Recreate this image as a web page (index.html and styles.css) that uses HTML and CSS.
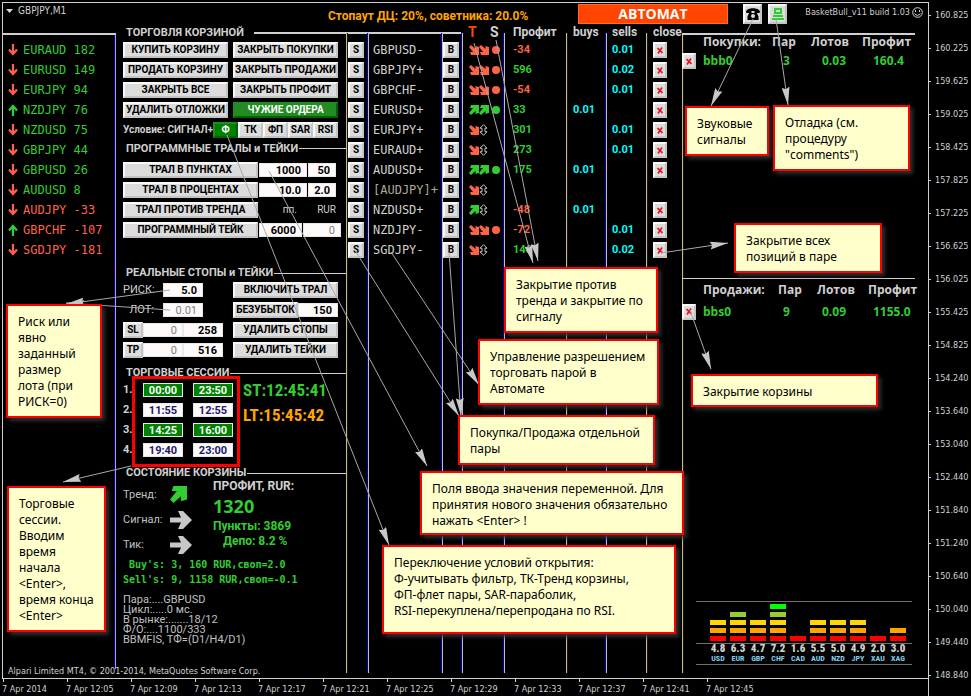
FILE: index.html
```html
<!DOCTYPE html>
<html lang="ru">
<head>
<meta charset="utf-8">
<title>GBPJPY,M1 – BasketBull</title>
<link rel="stylesheet" href="styles.css">
</head>
<body>
<svg class="defs" aria-hidden="true">
  <symbol id="down" viewBox="0 0 10 12"><path d="M5 0v10M1 5.500l4 4.500 4-4.500" fill="none" stroke="currentColor" stroke-width="2.200"/></symbol>
  <symbol id="up" viewBox="0 0 10 12"><path d="M5 12V2M1 6.500L5 2l4 4.500" fill="none" stroke="currentColor" stroke-width="2.200"/></symbol>
  <symbol id="se" viewBox="0 0 10 10"><path d="M0 2L2 0l4.500 4L6.500 1 10 2v8H2L1 7h3z" fill="currentColor"/></symbol>
  <symbol id="ne" viewBox="0 0 10 10"><path d="M0 8L2 10l4.500-4L6.500 9 10 8V0H2L1 3h3z" fill="currentColor"/></symbol>
  <symbol id="east" viewBox="0 0 22 18"><path d="M0 6.500h11L8 0h5l9 9-9 9H8l3-6.500H0z" fill="currentColor"/></symbol>
  <symbol id="flat" viewBox="0 0 9 12"><path d="M4.500.700L8 4.200H6v3.600h2L4.500 11.300 1 7.800h2V4.200H1z" fill="none" stroke="#c8c8c8" stroke-width="1"/></symbol>
  <symbol id="dot" viewBox="0 0 8 8"><circle cx="4" cy="4" r="4" fill="currentColor"/></symbol>
  <symbol id="x" viewBox="0 0 6 7"><path d="M.500 1L5.500 6M5 .500L1 6.500" fill="none" stroke="#e8101c" stroke-width="1.600"/></symbol>
</svg>

<div class="terminal">
  <main class="chart">
    <header class="top">
      <svg class="caret" viewBox="0 0 7 4" aria-hidden="true"><path d="M0 0h7L3.500 4z" fill="#d8d8d8"/></svg>
      <h1>GBPJPY,M1</h1>
      <p class="stopout">Стопаут ДЦ: 20%, советника: 20.0%</p>
      <button class="auto">АВТОМАТ</button>
      <div class="tools">
        <button class="tool" aria-label="Звук"><svg width="14" height="12" viewBox="0 0 14 12"><path d="M0 3.500C1-1 13-1 14 3.500L13.500 5H10V3H4v2H.500zM4 3h1.500v2h3V3H10l2.500 5.500V12h-11V8.500z" fill="#000"/><circle cx="7" cy="8" r="2" fill="#ddd"/></svg></button>
        <button class="tool" aria-label="Отладка"><svg width="12" height="12" viewBox="0 0 12 12"><path d="M2 0h8v6H2zM1 7h10v2H1zM0 10h12v2H0z" fill="#32cd32"/><path d="M4 2h4v2H4z" fill="#bfeebf"/></svg></button>
      </div>
      <p class="expert">BasketBull_v11 build 1.03<svg width="11" height="11" viewBox="0 0 11 11" aria-hidden="true"><circle cx="5.500" cy="5.500" r="4.800" fill="none" stroke="#d8d8d8"/><path d="M3.500 3v2M7.500 3v2" stroke="#d8d8d8"/><path d="M2.500 6.500q3 3.500 6 0" fill="none" stroke="#d8d8d8"/></svg></p>
    </header>

    <div class="panels">
      <ul class="ranks">
        <li class="pos"><svg class="neg"><use href="#down"/></svg>EURAUD 182</li>
        <li class="pos"><svg class="neg"><use href="#down"/></svg>EURUSD 149</li>
        <li class="pos"><svg class="neg"><use href="#down"/></svg>EURJPY 94</li>
        <li class="pos"><svg class="pos"><use href="#up"/></svg>NZDJPY 76</li>
        <li class="pos"><svg class="neg"><use href="#down"/></svg>NZDUSD 75</li>
        <li class="pos"><svg class="neg"><use href="#down"/></svg>GBPJPY 44</li>
        <li class="pos"><svg class="neg"><use href="#down"/></svg>GBPUSD 26</li>
        <li class="pos"><svg class="neg"><use href="#down"/></svg>AUDUSD 8</li>
        <li class="neg"><svg class="neg"><use href="#down"/></svg>AUDJPY -33</li>
        <li class="neg"><svg class="pos"><use href="#up"/></svg>GBPCHF -107</li>
        <li class="neg"><svg class="neg"><use href="#down"/></svg>SGDJPY -181</li>
      </ul>

      <div class="controls">
        <h2 class="first">ТОРГОВЛЯ КОРЗИНОЙ</h2>
        <div class="row pair"><button>КУПИТЬ КОРЗИНУ</button><button>ЗАКРЫТЬ ПОКУПКИ</button></div>
        <div class="row pair"><button>ПРОДАТЬ КОРЗИНУ</button><button>ЗАКРЫТЬ ПРОДАЖИ</button></div>
        <div class="row pair"><button>ЗАКРЫТЬ ВСЕ</button><button>ЗАКРЫТЬ ПРОФИТ</button></div>
        <div class="row pair"><button>УДАЛИТЬ ОТЛОЖКИ</button><button class="on">ЧУЖИЕ ОРДЕРА</button></div>
        <div class="row conditions"><span>Условие: СИГНАЛ+</span><button class="on">Ф</button><button>ТК</button><button>ФП</button><button>SAR</button><button>RSI</button></div>

        <h2 class="high">ПРОГРАММНЫЕ ТРАЛЫ и ТЕЙКИ</h2>
        <div class="row trail"><button id="b1">ТРАЛ В ПУНКТАХ</button><input class="w48" aria-labelledby="b1" value="1000"><input class="w28" aria-labelledby="b1" value="50"></div>
        <div class="row trail"><button id="b2">ТРАЛ В ПРОЦЕНТАХ</button><input class="w48" aria-labelledby="b2" value="10.0"><input class="w28" aria-labelledby="b2" value="2.0"></div>
        <div class="row trail"><button>ТРАЛ ПРОТИВ ТРЕНДА</button><span class="unit">пп.</span><span class="unit">RUR</span></div>
        <div class="row trail"><button id="b3">ПРОГРАММНЫЙ ТЕЙК</button><input class="w43" aria-labelledby="b3" value="6000"><input class="w38 dim" aria-labelledby="b3" value="0"></div>
        <div class="row"></div>

        <h2>РЕАЛЬНЫЕ СТОПЫ и ТЕЙКИ</h2>
        <div class="row pair"><div class="field"><label for="risk">РИСК:</label><input id="risk" class="w40" value="5.0"></div><button>ВКЛЮЧИТЬ ТРАЛ</button></div>
        <div class="row pair"><div class="field"><label class="end" for="lot">ЛОТ:</label><input id="lot" class="w40 dim" value="0.01"></div><div class="field"><button id="be" class="grow">БЕЗУБЫТОК</button><input class="w40" aria-labelledby="be" value="150"></div></div>
        <div class="row pair"><div class="field"><button id="sl" class="mini">SL</button><input class="w40 dim" aria-labelledby="sl" value="0"><input class="w40" aria-labelledby="sl" value="258"></div><button>УДАЛИТЬ СТОПЫ</button></div>
        <div class="row pair"><div class="field"><button id="tp" class="mini">TP</button><input class="w40 dim" aria-labelledby="tp" value="0"><input class="w40" aria-labelledby="tp" value="516"></div><button>УДАЛИТЬ ТЕЙКИ</button></div>

        <h2>ТОРГОВЫЕ СЕССИИ</h2>
        <div class="sessions">
          <div>
            <div class="row times"><span>1.</span><input class="w40 on" aria-label="Начало 1" value="00:00"><input class="w40 on" aria-label="Конец 1" value="23:50"></div>
            <div class="row times"><span>2.</span><input class="w40" aria-label="Начало 2" value="11:55"><input class="w40" aria-label="Конец 2" value="12:55"></div>
            <div class="row times"><span>3.</span><input class="w40 on" aria-label="Начало 3" value="14:25"><input class="w40 on" aria-label="Конец 3" value="16:00"></div>
            <div class="row times"><span>4.</span><input class="w40" aria-label="Начало 4" value="19:40"><input class="w40" aria-label="Конец 4" value="23:00"></div>
          </div>
          <div class="clocks"><p class="pos">ST:12:45:41</p><p class="local">LT:15:45:42</p></div>
        </div>

        <h2>СОСТОЯНИЕ КОРЗИНЫ</h2>
        <div class="state">
          <dl>
            <dt>Тренд:</dt><dd><svg class="pos trend"><use href="#ne"/></svg></dd>
            <dt>Сигнал:</dt><dd><svg><use href="#east"/></svg></dd>
            <dt>Тик:</dt><dd><svg><use href="#east"/></svg></dd>
          </dl>
          <div class="totals"><p class="caption">ПРОФИТ, RUR:</p><p class="sum">1320</p><p>Пункты: 3869</p><p class="depo">Депо: 8.2 %</p></div>
        </div>
        <pre class="sides"> Buy's: 3, 160 RUR,своп=2.0
Sell's: 9, 1158 RUR,своп=-0.1</pre>
        <p class="info">Пара:....GBPUSD<br>Цикл:.....0 мс.<br>В рынке:.......18/12<br>Ф/О:....1100/333<br>BBMFIS, ТФ=(D1/H4/D1)</p>
      </div>

      <table class="trade">
        <colgroup><col class="c21"><col class="c74"><col class="c20"><col class="c42"><col class="c63"><col class="c39"><col class="c41"><col class="c36"></colgroup>
        <thead><tr><th></th><th></th><th></th><th class="ts"><span class="t">T</span><span>S</span></th><th>Профит</th><th>buys</th><th>sells</th><th>close</th></tr></thead>
        <tbody>
          <tr><td><button>S</button></td><td>GBPUSD-</td><td><button>B</button></td><td class="neg"><svg><use href="#se"/></svg><svg><use href="#se"/></svg><svg class="dot"><use href="#dot"/></svg></td><td class="neg">-34</td><td></td><td>0.01</td><td><button class="close" aria-label="Закрыть GBPUSD"><svg><use href="#x"/></svg></button></td></tr>
          <tr><td><button>S</button></td><td>GBPJPY+</td><td><button>B</button></td><td class="neg"><svg><use href="#se"/></svg><svg><use href="#se"/></svg><svg class="dot"><use href="#dot"/></svg></td><td class="pos">596</td><td></td><td>0.02</td><td><button class="close" aria-label="Закрыть GBPJPY"><svg><use href="#x"/></svg></button></td></tr>
          <tr><td><button>S</button></td><td>GBPCHF-</td><td><button>B</button></td><td class="neg"><svg><use href="#se"/></svg><svg><use href="#se"/></svg><svg class="dot"><use href="#dot"/></svg></td><td class="neg">-54</td><td></td><td>0.01</td><td><button class="close" aria-label="Закрыть GBPCHF"><svg><use href="#x"/></svg></button></td></tr>
          <tr><td><button>S</button></td><td>EURUSD+</td><td><button>B</button></td><td class="pos"><svg><use href="#ne"/></svg><svg><use href="#ne"/></svg><svg class="dot"><use href="#dot"/></svg></td><td class="pos">33</td><td>0.01</td><td></td><td><button class="close" aria-label="Закрыть EURUSD"><svg><use href="#x"/></svg></button></td></tr>
          <tr><td><button>S</button></td><td>EURJPY+</td><td><button>B</button></td><td class="neg"><svg><use href="#se"/></svg><svg class="flat"><use href="#flat"/></svg></td><td class="pos">301</td><td></td><td>0.01</td><td><button class="close" aria-label="Закрыть EURJPY"><svg><use href="#x"/></svg></button></td></tr>
          <tr><td><button>S</button></td><td>EURAUD+</td><td><button>B</button></td><td class="neg"><svg><use href="#se"/></svg><svg class="flat"><use href="#flat"/></svg></td><td class="pos">273</td><td></td><td>0.01</td><td><button class="close" aria-label="Закрыть EURAUD"><svg><use href="#x"/></svg></button></td></tr>
          <tr><td><button>S</button></td><td>AUDUSD+</td><td><button>B</button></td><td class="pos"><svg><use href="#ne"/></svg><svg><use href="#ne"/></svg><svg class="dot"><use href="#dot"/></svg></td><td class="pos">175</td><td>0.01</td><td></td><td><button class="close" aria-label="Закрыть AUDUSD"><svg><use href="#x"/></svg></button></td></tr>
          <tr><td><button>S</button></td><td class="off">[AUDJPY]+</td><td><button>B</button></td><td class="neg"><svg><use href="#se"/></svg><svg class="flat"><use href="#flat"/></svg></td><td></td><td></td><td></td><td></td></tr>
          <tr><td><button>S</button></td><td>NZDUSD+</td><td><button>B</button></td><td class="pos"><svg><use href="#ne"/></svg><svg class="flat"><use href="#flat"/></svg></td><td class="neg">-48</td><td>0.01</td><td></td><td><button class="close" aria-label="Закрыть NZDUSD"><svg><use href="#x"/></svg></button></td></tr>
          <tr><td><button>S</button></td><td>NZDJPY-</td><td><button>B</button></td><td class="neg"><svg><use href="#se"/></svg><svg><use href="#se"/></svg><svg class="dot"><use href="#dot"/></svg></td><td class="neg">-72</td><td></td><td>0.01</td><td><button class="close" aria-label="Закрыть NZDJPY"><svg><use href="#x"/></svg></button></td></tr>
          <tr><td><button>S</button></td><td>SGDJPY-</td><td><button>B</button></td><td class="neg"><svg><use href="#se"/></svg><svg class="flat"><use href="#flat"/></svg></td><td class="pos">146</td><td></td><td>0.02</td><td><button class="close" aria-label="Закрыть SGDJPY"><svg><use href="#x"/></svg></button></td></tr>
          <tr class="rest"><td></td><td></td><td></td><td></td><td></td><td></td><td></td><td></td></tr>
        </tbody>
      </table>

      <div class="baskets">
        <table class="basket buy">
          <colgroup><col class="b1"><col class="b2"><col class="b3"><col class="b4"><col></colgroup>
          <thead><tr><th></th><th>Покупки:</th><th>Пар</th><th>Лотов</th><th>Профит</th></tr></thead>
          <tbody><tr><td><button class="close" aria-label="Закрыть bbb0"><svg><use href="#x"/></svg></button></td><td>bbb0</td><td>3</td><td>0.03</td><td>160.4</td></tr></tbody>
        </table>
        <table class="basket sell">
          <colgroup><col class="b1"><col class="b2"><col class="b3"><col class="b4"><col></colgroup>
          <thead><tr><th></th><th>Продажи:</th><th>Пар</th><th>Лотов</th><th>Профит</th></tr></thead>
          <tbody><tr><td><button class="close" aria-label="Закрыть bbs0"><svg><use href="#x"/></svg></button></td><td>bbs0</td><td>9</td><td>0.09</td><td>1155.0</td></tr></tbody>
        </table>
        <div class="meter">
          <ul class="bars">
            <li><i></i><i></i><i></i></li>
            <li><i></i><i></i><i></i><i></i></li>
            <li><i></i><i></i><i></i></li>
            <li><i></i><i></i><i></i><i></i><i></i></li>
            <li><i></i></li>
            <li><i></i><i></i><i></i></li>
            <li><i></i><i></i><i></i></li>
            <li><i></i><i></i><i></i></li>
            <li><i></i></li>
            <li><i></i><i></i></li>
          </ul>
          <ul class="names">
            <li><b>4.8</b>USD</li><li><b>6.3</b>EUR</li><li><b>4.7</b>GBP</li><li><b>7.2</b>CHF</li><li><b>1.6</b>CAD</li><li><b>5.5</b>AUD</li><li><b>5.0</b>NZD</li><li><b>4.9</b>JPY</li><li><b>2.0</b>XAU</li><li><b>3.0</b>XAG</li>
          </ul>
        </div>
      </div>
    </div>
    <footer class="legal">Alpari Limited MT4, © 2001-2014, MetaQuotes Software Corp.</footer>
  </main>

  <ol class="prices">
    <li>160.825</li><li>160.225</li><li>159.625</li><li>159.025</li><li>158.425</li><li>157.825</li><li>157.225</li><li>156.625</li><li>156.025</li><li>155.425</li><li>154.825</li><li>154.240</li><li>153.640</li><li>153.040</li><li>152.440</li><li>151.840</li><li>151.240</li><li>150.640</li><li>150.040</li><li>149.440</li><li>148.840</li>
  </ol>
  <ol class="hours">
    <li>7 Apr 2014</li><li>7 Apr 12:05</li><li>7 Apr 12:09</li><li>7 Apr 12:13</li><li>7 Apr 12:17</li><li>7 Apr 12:21</li><li>7 Apr 12:25</li><li>7 Apr 12:29</li><li>7 Apr 12:33</li><li>7 Apr 12:37</li><li>7 Apr 12:41</li><li>7 Apr 12:45</li>
  </ol>

  <svg class="arrows" width="930" height="696" aria-hidden="true">
    <defs><marker id="tip" viewBox="0 0 18 8" refX="18" refY="4" markerWidth="18" markerHeight="8" markerUnits="userSpaceOnUse" orient="auto"><path d="M0 0L18 4 0 8 2 4z" fill="#c8c8c8"/></marker></defs>
    <g fill="none" stroke="#a8a8a8" stroke-width="1">
      <path d="M474 43L533 263" marker-end="url(#tip)"/>
      <path d="M496 40L538 261" marker-end="url(#tip)"/>
      <path d="M753 19L711 106" marker-end="url(#tip)"/>
      <path d="M776 19L788 105" marker-end="url(#tip)"/>
      <path d="M661 253L728 243" marker-end="url(#tip)"/>
      <path d="M690 310L711 369" marker-end="url(#tip)"/>
      <path d="M170 290L66 304" marker-end="url(#tip)"/>
      <path d="M170 310L66 303" marker-end="url(#tip)"/>
      <path d="M131 466L63 482" marker-end="url(#tip)"/>
      <path d="M356 252L459 416" marker-end="url(#tip)"/>
      <path d="M391 252L479 385" marker-end="url(#tip)"/>
      <path d="M449 252L461 416" marker-end="url(#tip)"/>
      <path d="M227 135L389 545" marker-end="url(#tip)"/>
      <path d="M269 171L427 466" marker-end="url(#tip)"/>
    </g>
  </svg>
  <div class="frame"></div>
  <aside class="note n-risk">Риск или<br>явно<br>заданный<br>размер<br>лота (при<br>РИСК=0)</aside>
  <aside class="note n-session">Торговые<br>сессии.<br>Вводим<br>время<br>начала<br>&lt;Enter&gt;,<br>время конца<br>&lt;Enter&gt;</aside>
  <aside class="note n-sound">Звуковые<br>сигналы</aside>
  <aside class="note n-debug">Отладка (см.<br>процедуру<br>"comments")</aside>
  <aside class="note n-pair">Закрытие всех<br>позиций в паре</aside>
  <aside class="note n-basket">Закрытие корзины</aside>
  <aside class="note n-trend">Закрытие против<br>тренда и закрытие по<br>сигналу</aside>
  <aside class="note n-permit">Управление разрешением<br>торговать парой в<br>Автомате</aside>
  <aside class="note n-single">Покупка/Продажа отдельной<br>пары</aside>
  <aside class="note n-input">Поля ввода значения переменной. Для<br>принятия нового значения обязательно<br>нажать &lt;Enter&gt; !</aside>
  <aside class="note n-switch">Переключение условий открытия:<br>Ф-учитывать фильтр, ТК-Тренд корзины,<br>ФП-флет пары, SAR-параболик,<br>RSI-перекуплена/перепродана по RSI.</aside>
</div>
</body>
</html>
```

FILE: styles.css
```css
* { box-sizing: border-box; }
:root {
  --ui: Roboto, "Open Sans", sans-serif;
  --mono: "DejaVu Sans Mono", monospace;
  --tahoma: "DejaVu Sans Condensed", "Noto Sans", sans-serif;
  --narrow: "Roboto Condensed", "DejaVu Sans Condensed", sans-serif;
  --line: #d0d0d0;
  --green: #32cd32;
  --red: #ff6347;
}
body { margin: 0; background: #000; color: #d0d0d0; font: 11px/16px var(--ui); }
h1, h2, p, ul, ol, dl, dd, pre { margin: 0; padding: 0; }
ul, ol { list-style: none; }
.defs { position: absolute; width: 0; height: 0; }
.pos { color: var(--green); }
.neg { color: var(--red); }

.terminal {
  position: relative;
  display: grid;
  grid-template: 1fr 17px / 1fr 42px;
  min-height: 100vh;
  padding: 2px 0 0 2px;
}
.chart {
  position: relative;
  display: flex;
  flex-direction: column;
  border: 1px solid var(--line);
  padding-bottom: 5px;
}

/* title bar */
.top { display: flex; height: 21px; padding-top: 1px; font-family: var(--tahoma); }
.caret { width: 7px; height: 4px; margin: 5px 5px 0 3px; }
h1 { width: 310px; font-size: 10px; font-weight: 400; line-height: 14px; }
.stopout { width: 250px; font: 700 12px/24px var(--ui); color: #ffa500; white-space: nowrap; }
.auto { width: 150px; height: 20px; padding: 0; border: 1px solid #ff6a30; background: #ff4500; color: #fff; font: 700 14px/18px "Open Sans", sans-serif; }
.tools { display: flex; gap: 6px; margin-left: 15px; }
.tool { display: grid; place-items: center; width: 19px; height: 20px; padding: 0; }
.expert { display: flex; gap: 2px; margin-left: auto; padding-right: 5px; font-size: 9px; line-height: 16px; white-space: nowrap; }
.expert svg { margin-top: 3px; }

button {
  height: 16px;
  padding: 0;
  border: 2px solid;
  border-color: #f8f8f8 #c4c4c4 #c4c4c4 #f8f8f8;
  border-radius: 0;
  background: #dcdcdc;
  color: #000;
  font: 700 10px/12px var(--ui);
  white-space: nowrap;
}
button.on { border-color: #228b22 #006400 #006400 #228b22; background: #228b22; color: #fff; }
input {
  height: 14px;
  padding: 0 5px;
  border: 1px solid #e8e8e8;
  border-radius: 0;
  background: #fffafa;
  color: #000;
  font: 700 11px/12px var(--ui);
  text-align: right;
}
input.dim { color: #808080; font-weight: 400; }
input.on { background: #008000; color: #fff; }
.w28 { width: 28px; }
.w38 { width: 38px; }
.w40 { width: 40px; }
.w43 { width: 43px; }
.w48 { width: 48px; }

.panels { flex: 1; display: grid; grid-template-columns: 113px 230px 336px 1fr; }

.ranks {
  margin: 9px 0 4px;
  padding: 5px 0 0 5px;
  border-top: 2px solid var(--line);
  background: linear-gradient(90deg, #0000a0 1px, #b898c8 1px) right / 2px 100% no-repeat;
  font: 12px/20px var(--mono);
}
.ranks li { display: flex; align-items: center; gap: 5px; height: 20px; white-space: pre; }
.ranks svg { width: 10px; height: 12px; }

.controls { padding-left: 7px; }
h2 { display: flex; align-items: center; gap: 1px; height: 20px; padding: 6px 0 0 3px; font-size: 11px; font-weight: 700; line-height: 14px; white-space: nowrap; }
h2::after { content: ""; flex: 1; height: 1px; background: var(--line); }
h2.first { height: 16px; padding-top: 2px; gap: 10px; }
h2.first::after { height: 2px; margin-right: -115px; }
h2.high { padding: 0 0 3px 3px; }
.row { display: flex; align-items: center; height: 20px; }
.pair { display: grid; grid-template-columns: 105px 105px; gap: 5px; }
.conditions { font-size: 10px; font-weight: 700; }
.conditions span { width: 90px; white-space: nowrap; }
.conditions button { width: 25px; }
.conditions button.on { background: #008000; }
.trail { gap: 1px; }
.trail button { width: 135px; }
.unit { width: 38px; font-size: 10px; text-align: right; }
.field { display: flex; align-items: center; }
.field label { width: 40px; padding-right: 9px; font-size: 11px; }
.end { text-align: right; }
.grow { flex: 1; }
.mini { width: 20px; }
.sessions { display: flex; }
.times { gap: 10px; }
.times span { width: 10px; font-weight: 700; }
.times input { color: #191970; text-align: center; padding: 0; }
.times input.on { color: #fff; }
.clocks { display: grid; gap: 4px; align-content: start; padding-left: 10px; font: 700 17px/21px var(--narrow); white-space: nowrap; }
.clocks .local { color: #ffa500; }
.state { display: grid; grid-template-columns: 90px 1fr; color: var(--green); }
.state dl { display: grid; grid-template-columns: 47px 1fr; padding-top: 2px; color: #c0c0c0; font-size: 11px; line-height: 25px; }
.state dd { display: flex; align-items: center; height: 25px; }
.state svg { width: 22px; height: 18px; color: #c8c8c8; }
.state svg.trend { width: 17px; height: 17px; color: var(--green); }
.totals { font-size: 12px; font-weight: 700; line-height: 12px; }
.totals .caption { color: #d0d0d0; }
.totals .sum { font: 700 18px/28px "Open Sans", sans-serif; }
.totals .depo { padding-left: 10px; line-height: 18px; }
.sides { color: var(--green); font: 700 10px/15px var(--mono); }
.info { margin-top: 8px; color: #c0c0c0; font-size: 11px; line-height: 10px; }

/* pair table; every column carries its own rule on the left */
.trade { width: 336px; height: 100%; table-layout: fixed; border-collapse: collapse; }
.c21 { width: 21px; } .c74 { width: 74px; } .c20 { width: 20px; } .c42 { width: 42px; }
.c63 { width: 63px; } .c39 { width: 39px; } .c41 { width: 41px; } .c36 { width: 36px; }
.trade th, .trade td { padding: 0 0 0 7px; background: linear-gradient(90deg, #98d098 1px, #480000 1px) left / 2px 100% no-repeat; text-align: left; white-space: nowrap; }
.trade tr > :nth-child(2), .trade tr > :nth-child(3), .trade tr > :nth-child(4), .trade tr > :nth-child(5), .trade tr > :nth-child(7) {
  background-image: linear-gradient(90deg, #0000a0 1px, #c8b8d0 1px);
}
.trade th { height: 16px; background-size: 2px 7px; background-position: left bottom; font-size: 12px; font-weight: 700; line-height: 14px; }
.trade th:nth-child(5), .trade td:nth-child(5) { padding-left: 10px; }
.trade .ts { font-size: 14px; }
.ts .t { display: inline-block; width: 22px; color: #ff4500; }
.trade tr { height: 20px; }
.trade thead tr { height: 16px; }
.trade .rest { height: auto; }
.trade td { font: 700 11px/16px var(--ui); }
.trade td button { display: block; width: 16px; padding: 0; }
.trade td:nth-child(1), .trade td:nth-child(3) { padding-left: 2px; }
.trade td:nth-child(2) { padding-left: 6px; font: 12px/16px var(--mono); }
.trade td:nth-child(4) { padding-left: 8px; }
.trade td:nth-child(4) svg { width: 10px; height: 10px; vertical-align: middle; }
.trade td:nth-child(4) .dot { width: 8px; height: 8px; margin-left: 3px; }
.trade td:nth-child(4) .flat { width: 9px; height: 12px; }
.trade td:nth-child(6), .trade td:nth-child(7) { color: #00ffff; }
.trade .off { color: #b0a898; }
.trade td .close, .close { width: 14px; }
.close svg { width: 6px; height: 7px; display: block; margin: auto; }

.baskets { display: flex; flex-direction: column; padding: 9px 13px 8px 0; background: linear-gradient(90deg, #98d098 1px, #480000 1px) left bottom / 2px calc(100% - 9px) no-repeat; }
.basket { border-top: 2px solid var(--line); border-collapse: collapse; table-layout: fixed; width: 100%; }
.basket.sell { margin-top: 207px; border-top-width: 1px; }
.basket th, .basket td { height: 20px; padding: 0; font: 700 12px/14px "Open Sans", sans-serif; text-align: left; }
.basket th { height: 17px; vertical-align: top; }
.basket.sell th { height: 23px; vertical-align: middle; }
.basket td { color: var(--green); }
.basket .close { display: block; }
.b1 { width: 21px; } .b2 { width: 69px; } .b3 { width: 39px; } .b4 { width: 51px; }
.sell .b2 { width: 75px; }
.buy td:nth-child(n+3) { padding-left: 11px; }
.sell td:nth-child(n+3) { padding-left: 5px; }

.meter { margin: auto 3px 0 14px; border: solid #707070; border-width: 1px 0; }
.bars, .names { display: grid; grid-template-columns: repeat(10, 16px); gap: 4px; padding-left: 14px; }
.bars { height: 42px; padding-bottom: 2px; border-bottom: 1px solid #707070; }
.bars li { display: flex; flex-direction: column-reverse; gap: 3px; }
.bars i { height: 5px; background: #f00; }
.bars i:nth-child(2) { background: #ffa500; }
.bars i:nth-child(3) { background: #ffd700; }
.bars i:nth-child(4) { background: #9acd32; }
.bars i:nth-child(5) { background: #0f0; }
.names { padding-bottom: 1px; font: 700 8px/9px var(--narrow); color: #87ceeb; text-align: center; }
.names b { display: block; font-size: 11px; line-height: 10px; color: #d0d0d0; }

.legal { position: absolute; left: 5px; bottom: 0; font: 9px/14px var(--tahoma); }

.prices { grid-row: 1 / 3; grid-column: 2; padding-top: 7px; font: 9px/12px var(--tahoma); }
.prices li { display: flex; align-items: center; gap: 4px; height: 33px; padding-bottom: 21px; }
.prices li:last-child { height: 12px; padding-bottom: 0; }
.prices li::before { content: ""; width: 2px; height: 1px; background: var(--line); }
.hours { display: flex; border-right: 1px solid var(--line); font: 9px/14px var(--tahoma); white-space: nowrap; }
.hours li { width: 64px; padding-top: 3px; background: linear-gradient(var(--line), var(--line)) 1px 0 / 1px 3px no-repeat; }

/* manual callouts laid over the terminal */
.arrows { position: absolute; left: 0; top: 0; pointer-events: none; }
.frame { position: absolute; left: 132px; top: 376px; width: 108px; height: 91px; border: 3px solid #f00; pointer-events: none; }
.note {
  position: absolute;
  padding: 8px 10px;
  border: 2px solid #f00;
  background: #ffffcc;
  box-shadow: 3px 3px 4px #303030;
  color: #000;
  font: 12px/16px "Noto Sans", "DejaVu Sans Condensed", sans-serif;
  white-space: nowrap;
}
.n-risk { left: 6px; top: 304px; width: 96px; height: 114px; }
.n-session { left: 7px; top: 486px; width: 99px; height: 146px; }
.n-sound { left: 685px; top: 106px; width: 84px; height: 50px; }
.n-debug { left: 773px; top: 105px; width: 137px; height: 66px; }
.n-pair { left: 734px; top: 223px; width: 148px; height: 50px; }
.n-basket { left: 691px; top: 374px; width: 187px; height: 33px; }
.n-trend { left: 504px; top: 267px; width: 154px; height: 66px; }
.n-permit { left: 478px; top: 339px; width: 181px; height: 66px; }
.n-single { left: 458px; top: 415px; width: 197px; height: 50px; }
.n-input { left: 420px; top: 471px; width: 264px; height: 64px; }
.n-switch { left: 382px; top: 545px; width: 294px; height: 89px; }
```
